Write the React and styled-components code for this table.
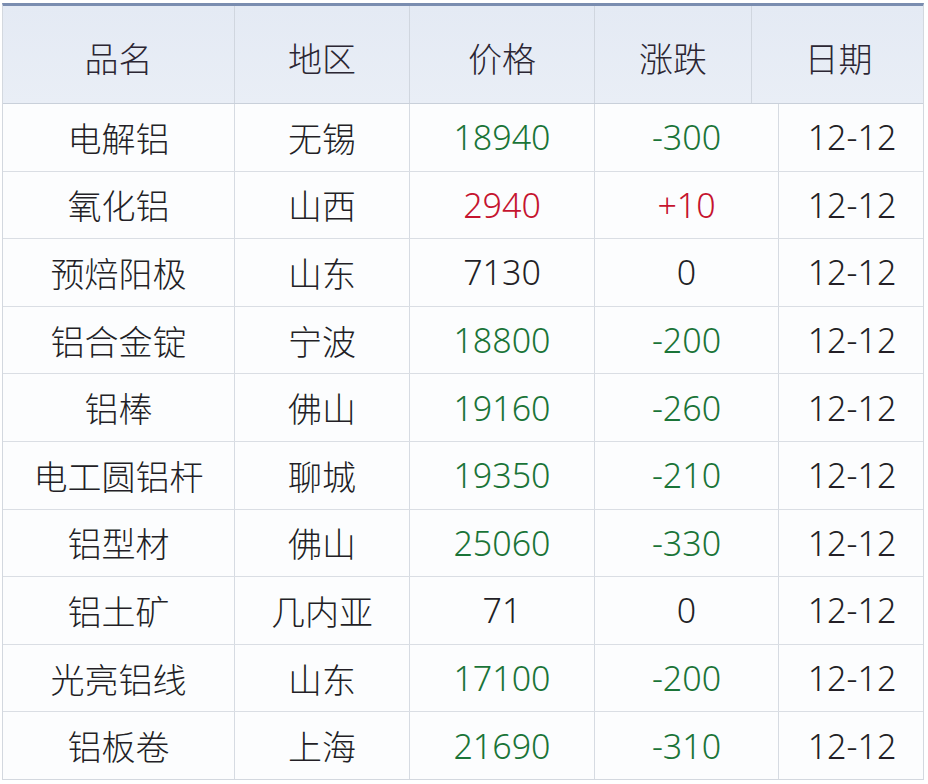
import styled, { createGlobalStyle } from "styled-components";

const GlobalStyle = createGlobalStyle`
  html, body {
    margin: 0;
    padding: 0;
    background: #ffffff;
  }
  body {
    font-family: "Noto Sans", "Noto Sans CJK SC", sans-serif;
    font-weight: 300;
  }
`;

const headCols = "231px 175px 185px 157px 174px";
const bodyCols = "231px 175px 185px 184px 147px";

const rows = [
  { name: "电解铝", area: "无锡", price: "18940", change: "-300" },
  { name: "氧化铝", area: "山西", price: "2940", change: "+10" },
  { name: "预焙阳极", area: "山东", price: "7130", change: "0" },
  { name: "铝合金锭", area: "宁波", price: "18800", change: "-200" },
  { name: "铝棒", area: "佛山", price: "19160", change: "-260" },
  { name: "电工圆铝杆", area: "聊城", price: "19350", change: "-210" },
  { name: "铝型材", area: "佛山", price: "25060", change: "-330" },
  { name: "铝土矿", area: "几内亚", price: "71", change: "0" },
  { name: "光亮铝线", area: "山东", price: "17100", change: "-200" },
  { name: "铝板卷", area: "上海", price: "21690", change: "-310" },
];

function tone(change) {
  if (change.startsWith("-")) return "down";
  if (change.startsWith("+")) return "up";
  return "flat";
}

export default function App() {
  return (
    <>
      <GlobalStyle />
      <Page>
        <Table>
          <HeadRow>
            {["品名", "地区", "价格", "涨跌", "日期"].map((h) => (
              <HeadCell key={h}>{h}</HeadCell>
            ))}
          </HeadRow>
          {rows.map((r, i) => {
            const t = tone(r.change);
            return (
              <BodyRow key={r.name} $last={i === rows.length - 1}>
                <Cell>{r.name}</Cell>
                <Cell>{r.area}</Cell>
                <Cell $tone={t}>{r.price}</Cell>
                <Cell $tone={t}>{r.change}</Cell>
                <Cell>12-12</Cell>
              </BodyRow>
            );
          })}
        </Table>
      </Page>
    </>
  );
}

const Page = styled.div`
  padding: 3px 0 0 2px;
  width: 928px;
  box-sizing: border-box;
`;

const Table = styled.div`
  width: 922px;
  border-top: 3px solid #7a8db0;
  border-left: 1px solid #d3d8df;
  border-right: 1px solid #d3d8df;
  border-bottom: 1px solid #d3d8df;
  box-sizing: border-box;
  background: #fcfdfe;
`;

const HeadRow = styled.div`
  display: grid;
  grid-template-columns: ${headCols};
  height: 97px;
  background: linear-gradient(#e4eaf4, #e9eef6);
  border-bottom: 1px solid #c9d0da;
`;

const HeadCell = styled.div`
  display: flex;
  align-items: center;
  justify-content: center;
  padding-top: 6px;
  font-size: 34px;
  color: #2b2633;
  border-left: 1px solid #d0d6df;
  &:first-child {
    border-left: none;
  }
`;

const BodyRow = styled.div`
  display: grid;
  grid-template-columns: ${bodyCols};
  height: 66.6px;
  border-bottom: ${({ $last }) => ($last ? "none" : "1px solid #dadee4")};
`;

const toneColor = {
  down: "#1a7438",
  up: "#c5142f",
  flat: "#231f26",
};

const Cell = styled.div`
  display: flex;
  align-items: center;
  justify-content: center;
  font-size: 34px;
  color: ${({ $tone }) => toneColor[$tone] || "#231f26"};
  border-left: 1px solid #d6dbe2;
  &:first-child {
    border-left: none;
  }
`;
